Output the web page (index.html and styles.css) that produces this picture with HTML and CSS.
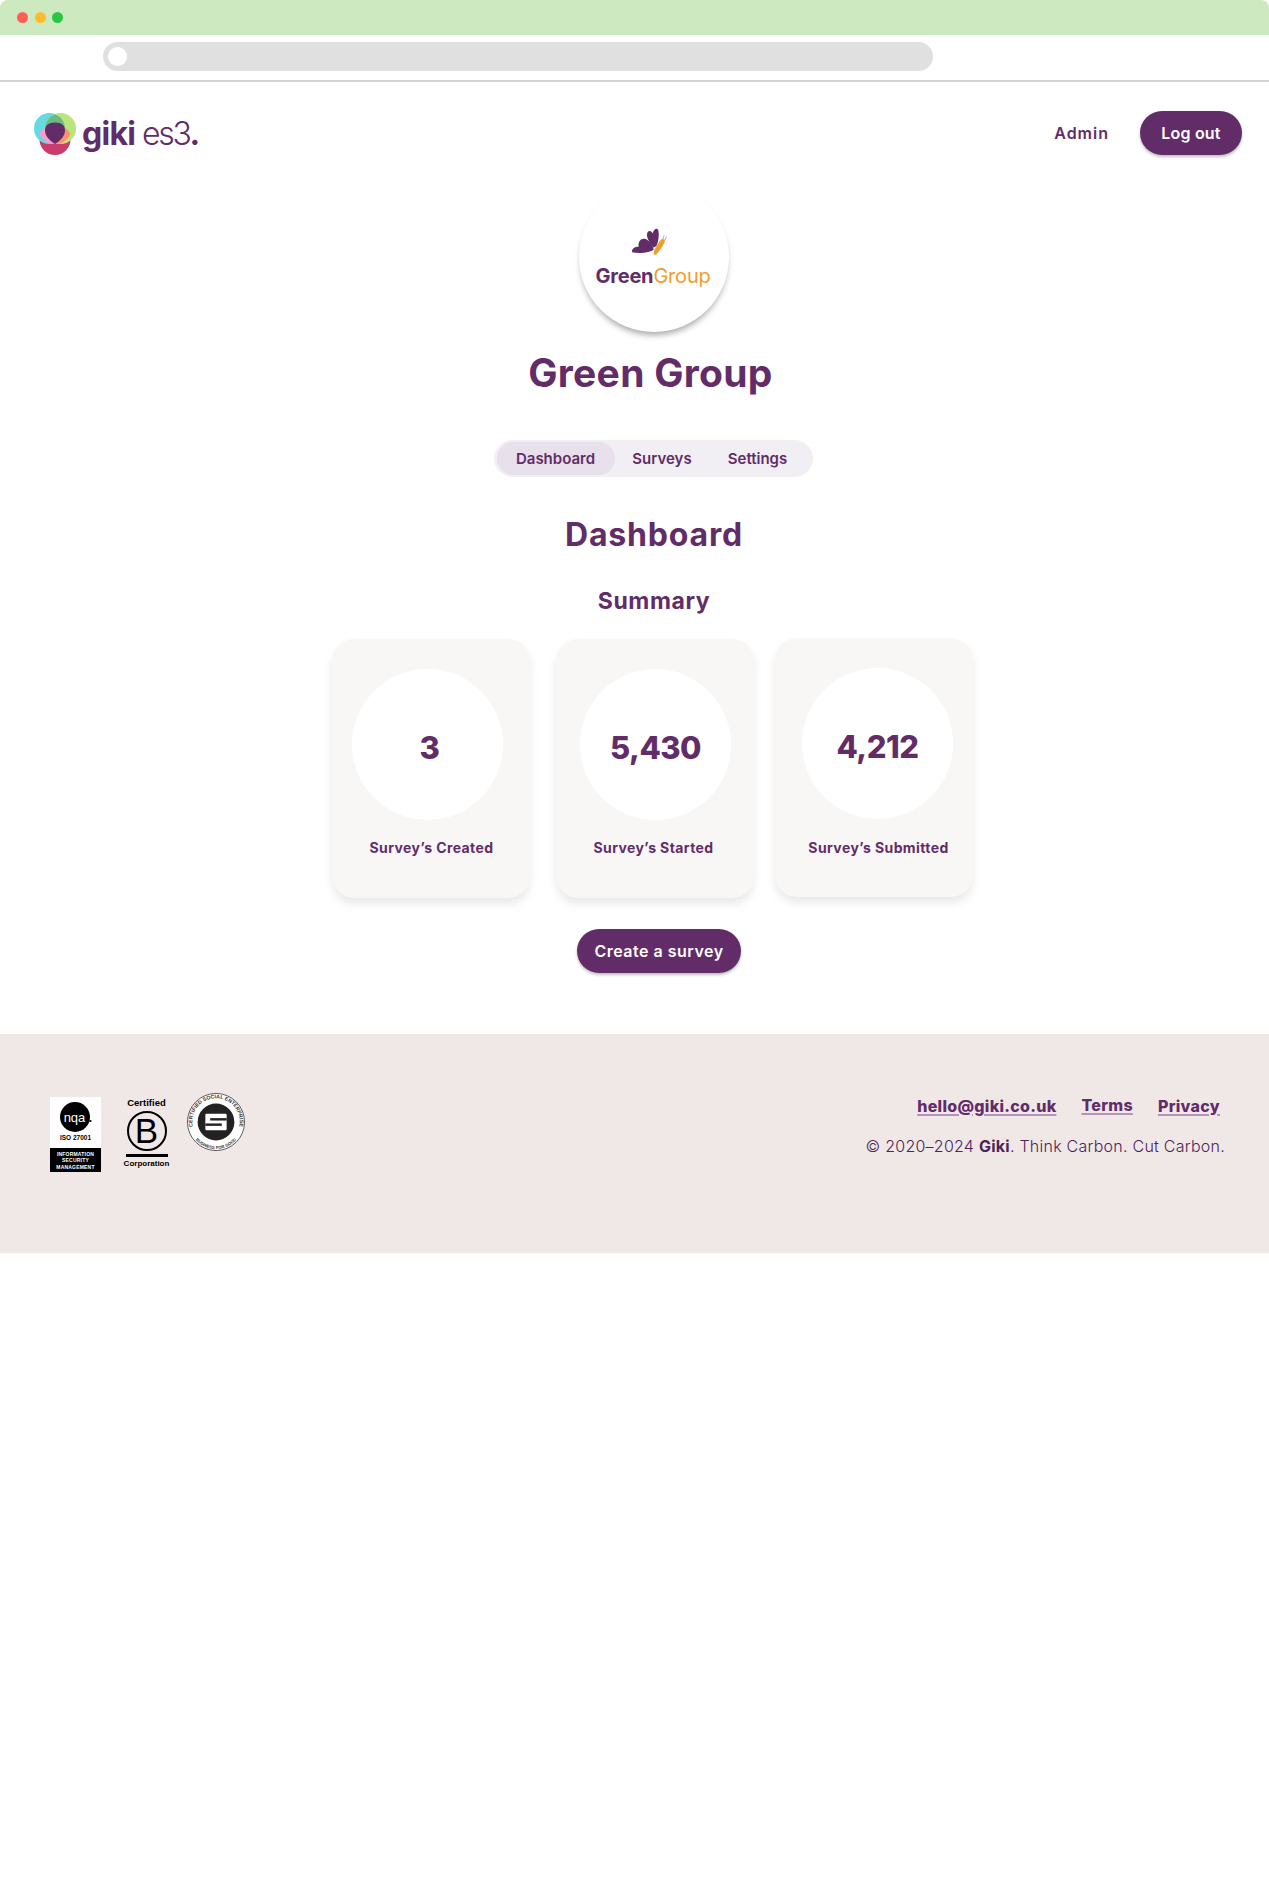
FILE: index.html
```html
<!DOCTYPE html>
<html lang="en">
<head>
    <meta charset="UTF-8">
    <meta name="viewport" content="width=device-width, initial-scale=1.0">
    <title>Giki es3 - Dashboard</title>
    <link rel="stylesheet" href="styles.css">
</head>
<body>
    <div class="browser-top">
        <span class="dot dot-red"></span>
        <span class="dot dot-yellow"></span>
        <span class="dot dot-green"></span>
    </div>
    <div class="browser-bar">
        <div class="address"><span class="address-knob"></span></div>
    </div>

    <header class="site-header">
        <a class="logo" href="#">
            <svg class="logo-mark" width="42" height="42" viewBox="0 0 42 42">
                <circle cx="21" cy="26.5" r="15.5" fill="#c93c6e"/>
                <circle cx="15.5" cy="15.5" r="15.5" fill="#66d9e2"/>
                <circle cx="26.5" cy="15.5" r="15.5" fill="#b9e57b"/>
                <path d="M21 1.2 A15.5 15.5 0 0 1 31 15.5 A15.5 15.5 0 0 1 21 29.8 A15.5 15.5 0 0 1 11 15.5 A15.5 15.5 0 0 1 21 1.2Z" fill="#6bbb85"/>
                <path d="M5.5 21 A15.5 15.5 0 0 1 21 12.5 L21 31 A15.5 15.5 0 0 1 10 27 A15 15 0 0 1 5.5 21Z" fill="#fb9ccb"/>
                <path d="M36.5 21 A15.5 15.5 0 0 0 21 12.5 L21 31 A15.5 15.5 0 0 0 32 27 A15 15 0 0 0 36.5 21Z" fill="#fd8e70"/>
                <path d="M21 9.5 C28 9.5 31 12.5 31 17.5 C31 23 26 28 21 31 C16 28 11 23 11 17.5 C11 12.5 14 9.5 21 9.5Z" fill="#622c69"/>
            </svg>
            <span class="logo-text"><b>giki</b> es3<b>.</b></span>
        </a>
        <nav class="top-nav">
            <a class="admin-link" href="#">Admin</a>
            <a class="btn btn-logout" href="#">Log out</a>
        </nav>
    </header>

    <main class="content">
        <div class="org-avatar">
            <svg class="butterfly" width="38" height="30" viewBox="0 0 40 32">
                <path d="M2 27 C1 23 5 21 9 21 C8 15 12 11 17 13 C21 15 24 19 25 24 C22 27 10 29 2 27Z" fill="#622c69"/>
                <path d="M25 22 C21 17 17 12 18 7 C19 3 23 4 24 7 C25 2 29 0 30 4 C31 9 30 16 28 20Z" fill="#622c69"/>
                <path d="M25 29 C24 27 27 21 32 14 C34 12 37 13 37 15 C36 19 32 25 28 29 C27 30 26 30 25 29Z" fill="#eda02d"/>
                <path d="M35 13 L36 9 M37 14 L38.5 10" stroke="#8a8a8a" stroke-width="0.7"/>
            </svg>
            <div class="org-logo-text"><b>Green</b>Group</div>
        </div>
        <h1 class="org-name">Green Group</h1>

        <ul class="tabs">
            <li class="tab tab-active">Dashboard</li>
            <li class="tab tab-surveys">Surveys</li>
            <li class="tab tab-settings">Settings</li>
        </ul>

        <h2 class="page-title">Dashboard</h2>
        <h3 class="section-title">Summary</h3>

        <div class="cards">
            <div class="card card-created">
                <div class="card-circle">3</div>
                <div class="card-label">Survey’s Created</div>
            </div>
            <div class="card card-started">
                <div class="card-circle">5,430</div>
                <div class="card-label">Survey’s Started</div>
            </div>
            <div class="card card-submitted">
                <div class="card-circle">4,212</div>
                <div class="card-label">Survey’s Submitted</div>
            </div>
        </div>

        <a class="btn btn-create" href="#">Create a survey</a>
    </main>

    <footer class="site-footer">
        <div class="badges">
            <div class="badge-nqa">
                <div class="nqa-top">
                    <span class="nqa-circle">nqa<i>.</i></span>
                    <span class="nqa-iso">ISO 27001</span>
                </div>
                <div class="nqa-bottom">INFORMATION<br>SECURITY<br>MANAGEMENT</div>
            </div>
            <div class="badge-bcorp">
                <span class="bcorp-certified">Certified</span>
                <span class="bcorp-ring">B</span>
                <span class="bcorp-rule"></span>
                <span class="bcorp-word">Corporation</span>
            </div>
            <svg class="badge-seal" width="60" height="60" viewBox="0 0 62 62">
                <defs>
                    <path id="sealTop" d="M12.2 46.7 A24.5 24.5 0 1 1 49.8 46.7"/>
                    <path id="sealBottom" d="M6.8 45 A28 28 0 0 0 55.2 45"/>
                </defs>
                <circle cx="31" cy="31" r="29.5" fill="#fff" stroke="#333" stroke-width="0.8"/>
                <circle cx="31" cy="31" r="19" fill="#222"/>
                <text class="seal-text"><textPath href="#sealTop" startOffset="50%" text-anchor="middle">CERTIFIED SOCIAL ENTERPRISE</textPath></text>
                <text class="seal-text seal-text-small"><textPath href="#sealBottom" startOffset="50%" text-anchor="middle">BUSINESS FOR GOOD</textPath></text>
                <rect x="20" y="22.5" width="22" height="17" rx="1" fill="#fff"/>
                <rect x="25" y="27" width="17" height="2.5" fill="#222"/>
                <rect x="20" y="32.5" width="17" height="2.5" fill="#222"/>
            </svg>
        </div>
        <div class="footer-right">
            <div class="footer-links">
                <a href="#">hello@giki.co.uk</a>
                <a class="link-terms" href="#">Terms</a>
                <a href="#">Privacy</a>
            </div>
            <p class="copyright">© 2020–2024 <b>Giki</b>. Think Carbon. Cut Carbon.</p>
        </div>
    </footer>
</body>
</html>
```

FILE: styles.css
```css
* {
    box-sizing: border-box;
}

body {
    margin: 0;
    font-family: "Inter", "Open Sans", sans-serif;
    color: #622c69;
    background-color: #fff;
}

a {
    color: inherit;
    text-decoration: none;
}

/* Browser frame */
.browser-top {
    height: 35px;
    display: flex;
    align-items: center;
    gap: 6.5px;
    padding-left: 17px;
    background-color: #cce9c0;
    border-radius: 8px 8px 0 0;
}

.dot {
    width: 11px;
    height: 11px;
    border-radius: 50%;
}

.dot-red { background-color: #ff5f57; }
.dot-yellow { background-color: #febc2e; }
.dot-green { background-color: #28c840; }

.browser-bar {
    height: 47px;
    padding: 7px 0 0 103px;
    border-bottom: 2px solid #d3d3d3;
}

.address {
    width: 830px;
    height: 29px;
    display: flex;
    align-items: center;
    padding-left: 5px;
    background-color: #e0e0e0;
    border-radius: 15px;
}

.address-knob {
    width: 19px;
    height: 19px;
    border-radius: 50%;
    background-color: #fff;
}

/* Header */
.site-header {
    height: 102px;
    display: flex;
    justify-content: space-between;
    align-items: center;
    padding: 0 27px 0 34px;
}

.logo {
    display: flex;
    align-items: center;
    gap: 6px;
    padding-top: 2px;
}

.logo-text {
    font-size: 32px;
    font-weight: 300;
    letter-spacing: -2.3px;
    line-height: 42px;
}

.logo-text b {
    font-weight: 700;
    letter-spacing: -0.7px;
}

.top-nav {
    display: flex;
    align-items: center;
    gap: 31px;
}

.admin-link {
    font-size: 16px;
    font-weight: 600;
    letter-spacing: 1px;
}

.btn {
    display: block;
    height: 44px;
    line-height: 44px;
    text-align: center;
    color: #fff;
    font-size: 16px;
    font-weight: 600;
    background-color: #622c69;
    border-radius: 22px;
    box-shadow: 0 2px 3px rgba(0, 0, 0, 0.25);
}

.btn-logout {
    width: 102px;
    letter-spacing: 0.2px;
}

/* Main */
.content {
    display: flex;
    flex-direction: column;
    align-items: center;
    padding-left: 39px;
}

.org-avatar {
    width: 150px;
    height: 150px;
    margin-top: -2px;
    padding-top: 45px;
    text-align: center;
    background-color: #fff;
    border-radius: 50%;
    box-shadow: 0 5px 6px -2px rgba(0, 0, 0, 0.35);
}

.butterfly {
    display: block;
    margin: 0 0 0 51px;
}

.org-logo-text {
    margin: 7px 2px 0 0;
    font-size: 20px;
    line-height: 24px;
    font-weight: 400;
    letter-spacing: -0.2px;
    color: #eda02d;
}

.org-logo-text b {
    font-weight: 700;
    color: #622c69;
}

.org-name {
    margin: 14px 7px 0 0;
    font-size: 39px;
    line-height: 54px;
    font-weight: 700;
    letter-spacing: 0.3px;
}

.tabs {
    display: flex;
    align-items: center;
    list-style: none;
    width: 319px;
    height: 37px;
    margin: 40px 2px 0 0;
    padding: 0 3px;
    background-color: #f1eff3;
    border-radius: 19px;
}

.tab {
    font-size: 15px;
    font-weight: 600;
    line-height: 33px;
    text-align: center;
}

.tab-active {
    width: 118px;
    background-color: #e8e0ea;
    border-radius: 17px;
}

.tab-surveys {
    width: 75px;
    margin-left: 10px;
}

.tab-settings {
    width: 100px;
    margin-left: 8px;
}

.page-title {
    margin: 38px 0 0 0;
    font-size: 32px;
    line-height: 40px;
    font-weight: 700;
    letter-spacing: 0.8px;
}

.section-title {
    margin: 30px 0 0 0;
    font-size: 23px;
    line-height: 32px;
    font-weight: 700;
    letter-spacing: 0.6px;
}

.cards {
    display: flex;
    align-items: flex-start;
    margin: 22px 3px 0 0;
}

.card {
    width: 198px;
    height: 259px;
    padding-top: 30px;
    background-color: #f8f7f6;
    border-radius: 22px;
    box-shadow: 0 6px 10px rgba(0, 0, 0, 0.09);
}

.card-started {
    margin-left: 26px;
}

.card-submitted {
    margin: -1px 0 0 21px;
}

.card-circle {
    width: 151px;
    height: 151px;
    display: flex;
    align-items: center;
    justify-content: center;
    padding-top: 5px;
    font-size: 31px;
    font-weight: 800;
    letter-spacing: -0.5px;
    background-color: #fff;
    border-radius: 50%;
}

.card-created .card-circle { margin-left: 20px; padding-left: 4px; }
.card-started .card-circle { margin-left: 24px; }
.card-submitted .card-circle { margin-left: 27px; padding-top: 6px; }

.card-label {
    margin-top: 19px;
    font-size: 14px;
    line-height: 18px;
    font-weight: 700;
    letter-spacing: 0.4px;
    text-align: center;
}

.card-created .card-label { margin-left: 1px; }
.card-started .card-label { margin-left: -3px; }
.card-submitted .card-label { margin: 20px 0 0 9px; }

.btn-create {
    width: 164px;
    margin: 31px 0 0 10px;
    letter-spacing: 0.5px;
}

/* Footer */
.site-footer {
    height: 219px;
    margin-top: 61px;
    display: flex;
    justify-content: space-between;
    align-items: flex-start;
    padding: 57px 43px 0 50px;
    background-color: #f0e8e7;
}

.badges {
    display: flex;
    align-items: flex-start;
}

.badge-nqa {
    width: 51px;
    height: 75px;
    margin-top: 6px;
    display: flex;
    flex-direction: column;
    background-color: #fff;
    font-family: "Liberation Sans", sans-serif;
    color: #000;
}

.nqa-top {
    height: 51px;
    display: flex;
    flex-direction: column;
    align-items: center;
}

.nqa-circle {
    width: 30px;
    height: 30px;
    margin-top: 5px;
    line-height: 31px;
    text-align: center;
    font-size: 13px;
    color: #fff;
    background-color: #000;
    border-radius: 50%;
    position: relative;
    left: -1px;
}

.nqa-circle i {
    font-style: normal;
    font-weight: 700;
    color: #000;
    position: absolute;
    left: 29px;
    top: 0;
}

.nqa-iso {
    margin-top: 2px;
    font-size: 6.5px;
    font-weight: 700;
}

.nqa-bottom {
    flex: 1;
    padding-top: 3px;
    text-align: center;
    font-size: 5px;
    line-height: 6.4px;
    font-weight: 700;
    letter-spacing: 0.2px;
    color: #fff;
    background-color: #000;
}

.badge-bcorp {
    width: 43px;
    margin: 7px 0 0 24px;
    display: flex;
    flex-direction: column;
    align-items: center;
    font-family: "Liberation Sans", sans-serif;
    color: #000;
}

.bcorp-certified {
    font-size: 9.5px;
    line-height: 10px;
    font-weight: 700;
    white-space: nowrap;
}

.bcorp-word {
    font-size: 8px;
    line-height: 10px;
    font-weight: 700;
    white-space: nowrap;
}

.bcorp-ring {
    width: 40px;
    height: 40px;
    margin-top: 3px;
    line-height: 35px;
    text-align: center;
    font-size: 35px;
    border: 2.5px solid #000;
    border-radius: 50%;
}

.bcorp-rule {
    width: 42px;
    height: 3px;
    margin: 3px 0 2px;
    background-color: #000;
}

.badge-seal {
    margin: 1px 0 0 18px;
}

.seal-text {
    font-family: "Liberation Sans", sans-serif;
    font-size: 5.4px;
    font-weight: 700;
    fill: #333;
}

.seal-text-small {
    font-size: 4.4px;
}

.footer-right {
    text-align: right;
    width: 380px;
}

.footer-links {
    display: flex;
    justify-content: flex-end;
    gap: 25px;
    padding-right: 6px;
    margin-top: 5px;
}

.footer-links a {
    font-size: 16px;
    line-height: 20px;
    font-weight: 800;
    letter-spacing: 0.3px;
    text-decoration: underline;
    text-decoration-color: #b394b8;
    text-decoration-thickness: 2px;
    text-underline-offset: 2px;
}

.footer-links .link-terms {
    position: relative;
    top: -1px;
}

.copyright {
    margin: 18px 1px 0 0;
    font-size: 16px;
    line-height: 24px;
    font-weight: 300;
    letter-spacing: 0.25px;
    white-space: nowrap;
    color: #4f2356;
}

.copyright b {
    font-weight: 700;
}
```
